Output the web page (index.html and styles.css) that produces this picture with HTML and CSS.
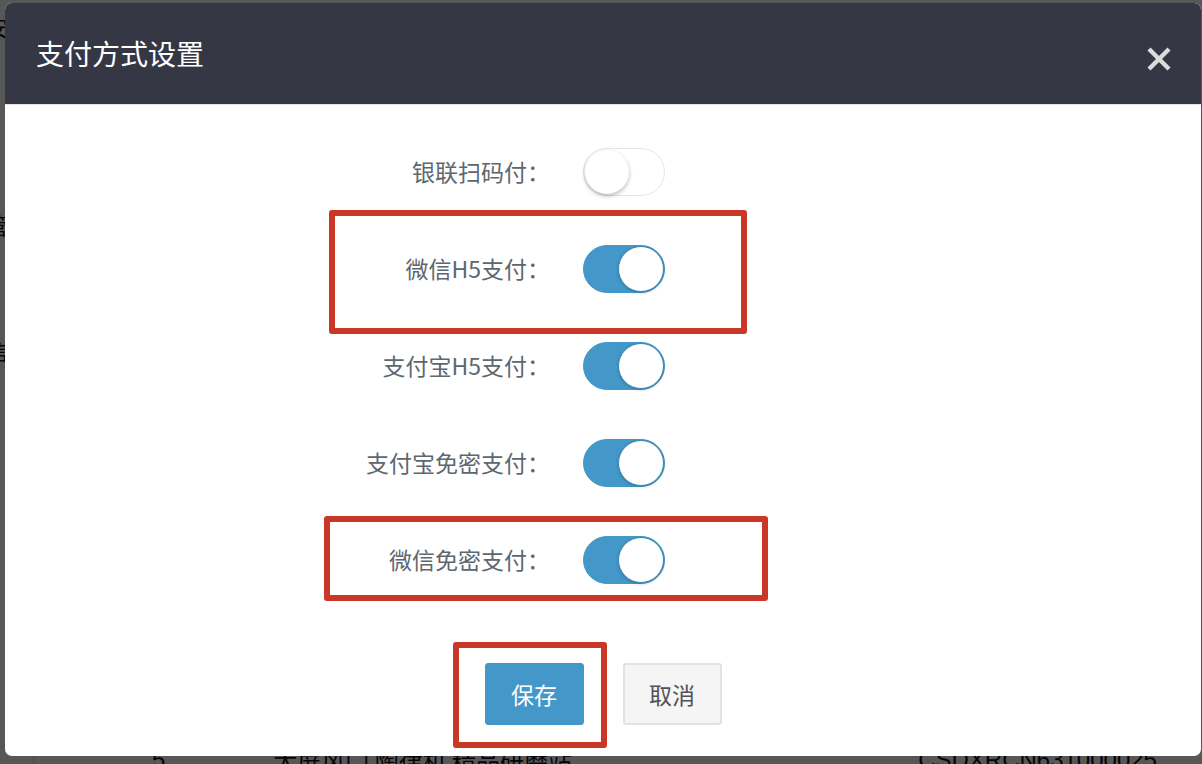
FILE: index.html
```html
<!DOCTYPE html>
<html lang="zh">
<head>
<meta charset="utf-8">
<link rel="stylesheet" href="styles.css">
</head>
<body>
<div class="page">
  <div class="side">
    <span class="side-ch s1">安</span>
    <span class="side-ch s2">管</span>
    <span class="side-ch s3">信</span>
  </div>
  <div class="table-row">
    <span class="cell c-num">5</span>
    <span class="cell c-name">大屏风门 陶律机 精品研磨站</span>
    <span class="cell c-code">CSDXRCN631000025</span>
  </div>
</div>
<div class="overlay"></div>
<div class="modal">
  <div class="modal-header">
    <h2 class="modal-title">支付方式设置</h2>
    <button class="close" aria-label="关闭">
      <svg width="24" height="24" viewBox="0 0 24 24"><path d="M2 2L22 22M22 2L2 22" stroke="#dcdcde" stroke-width="4.4" stroke-linecap="butt"/></svg>
    </button>
  </div>
  <div class="modal-body">
    <div class="form-row">
      <label class="label">银联扫码付：</label>
      <span class="switch"><span class="knob"></span></span>
    </div>
    <div class="form-row">
      <label class="label">微信H5支付：</label>
      <span class="switch on"><span class="knob"></span></span>
    </div>
    <div class="form-row">
      <label class="label">支付宝H5支付：</label>
      <span class="switch on"><span class="knob"></span></span>
    </div>
    <div class="form-row">
      <label class="label">支付宝免密支付：</label>
      <span class="switch on"><span class="knob"></span></span>
    </div>
    <div class="form-row">
      <label class="label">微信免密支付：</label>
      <span class="switch on"><span class="knob"></span></span>
    </div>
    <div class="actions">
      <button class="btn btn-primary">保存</button>
      <button class="btn btn-default">取消</button>
    </div>
  </div>
  <div class="mark mark1"></div>
  <div class="mark mark2"></div>
  <div class="mark mark3"></div>
</div>
</body>
</html>
```
FILE: styles.css
```css
* { box-sizing: border-box; }
html, body { margin: 0; padding: 0; }
body {
  width: 1202px;
  height: 764px;
  overflow: hidden;
  position: relative;
  background: #fff;
  font-family: "Noto Sans CJK SC", "Noto Sans", sans-serif;
}
.page {
  height: 764px;
  display: flex;
  flex-direction: column;
  justify-content: space-between;
  position: relative;
}
.side {
  position: relative;
  height: 400px;
}
.side-ch {
  position: absolute;
  left: -14px;
  font-size: 22px;
  color: #111;
}
.s1 { top: 10px; }
.s2 { top: 208px; }
.s3 { top: 334px; }
.table-row {
  display: flex;
  align-items: flex-start;
  height: 10px;
  border-left: 1px solid #ddd;
  margin-left: 33px;
  font-family: "Liberation Sans", "Noto Sans CJK SC", sans-serif;
  font-size: 24px;
  color: #111;
  line-height: 1;
}
.cell { display: block; margin-top: -6px; }
.c-num { margin-left: 118px; }
.c-name { margin-left: 108px; font-family: "Noto Sans CJK SC", sans-serif; }
.c-code { margin-left: 346px; }
.overlay {
  position: absolute;
  inset: 0;
  background: rgba(0, 0, 0, 0.66);
}
.modal {
  position: absolute;
  left: 5px;
  top: 3px;
  width: 1196px;
  height: 753px;
  background: #fff;
  border-radius: 7px;
  overflow: hidden;
  display: flex;
  flex-direction: column;
}
.modal-header {
  height: 102px;
  background: #363745;
  border-bottom: 1px solid #e5e5e5;
  display: flex;
  align-items: center;
  justify-content: space-between;
  padding: 0 30px 0 31px;
  flex-shrink: 0;
}
.modal-title {
  margin: 0;
  font-weight: 400;
  font-size: 28px;
  color: #fff;
  line-height: 1;
  padding-bottom: 2px;
}
.close {
  background: none;
  border: none;
  padding: 0;
  width: 24px;
  height: 24px;
  margin-top: 10px;
  display: flex;
}
.modal-body {
  padding-top: 18px;
  display: flex;
  flex-direction: column;
}
.form-row {
  height: 97px;
  display: flex;
  align-items: center;
}
.label {
  width: 545px;
  text-align: right;
  font-size: 23px;
  color: #5d676f;
  line-height: 1;
}
.switch {
  margin-left: 33px;
  width: 82px;
  height: 48px;
  border-radius: 24px;
  background: #fff;
  border: 1px solid #e6e6e6;
  position: relative;
  display: block;
}
.switch .knob {
  position: absolute;
  top: 1px;
  left: 1px;
  width: 44px;
  height: 44px;
  border-radius: 50%;
  background: #fff;
  box-shadow: 0 2px 4px rgba(0, 0, 0, 0.28);
}
.switch.on {
  background: #4398c9;
  border-color: #4398c9;
}
.switch.on .knob {
  left: auto;
  right: 0;
  top: 0;
  width: 46px;
  height: 46px;
  border: 1px solid #3a86b4;
  box-shadow: 0 1px 3px rgba(0, 0, 0, 0.2);
}
.actions {
  display: flex;
  justify-content: center;
  gap: 39px;
  margin-top: 55px;
}
.btn {
  width: 99px;
  height: 62px;
  border-radius: 3px;
  font-family: "Noto Sans CJK SC", sans-serif;
  font-size: 23px;
  line-height: 1;
  cursor: pointer;
}
.btn-primary {
  background: #4398c9;
  border: 1px solid #4398c9;
  color: #fff;
}
.btn-default {
  background: #f5f5f5;
  border: 2px solid #e2e2e2;
  color: #4f5257;
}
.mark {
  position: absolute;
  border: 6px solid #cb3727;
  border-radius: 3px;
}
.mark1 { left: 324px; top: 207px; width: 418px; height: 124px; }
.mark2 { left: 319px; top: 513px; width: 444px; height: 85px; }
.mark3 { left: 448px; top: 639px; width: 154px; height: 106px; }
```
